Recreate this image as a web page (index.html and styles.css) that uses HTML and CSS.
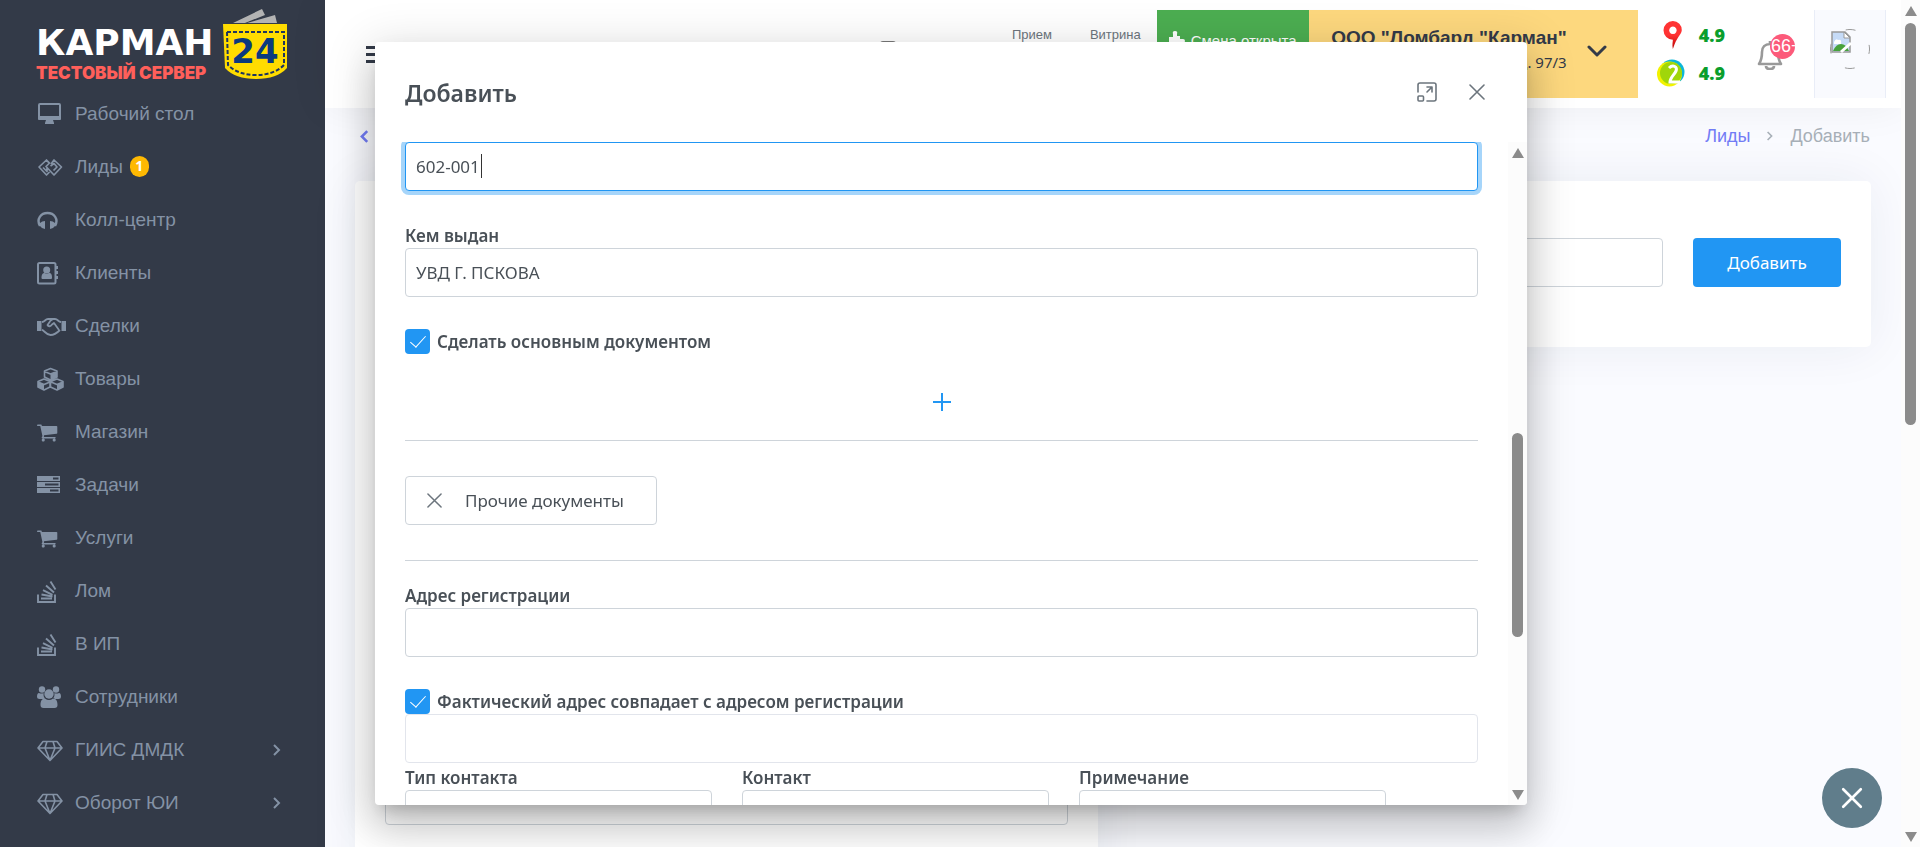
FILE: index.html
```html
<!DOCTYPE html>
<html lang="ru">
<head>
<meta charset="utf-8">
<title>Карман 24 — Лиды</title>
<link rel="stylesheet" href="styles.css">
</head>
<body>
<svg class="sprite" aria-hidden="true">
  <symbol id="i-desktop" viewBox="0 0 29 24"><path fill="none" stroke="currentColor" stroke-width="2" d="M3 2h19q1 0 1 1v12q0 2-1 2H3q-1 0-1-2V3q0-1 1-1z"/><path fill="currentColor" d="M1 14h23v3q0 1-1 1h-7l1 3v1H8v-1l1-3H2q-1 0-1-1z"/></symbol>
  <symbol id="i-leads" viewBox="0 0 29 24"><path fill="none" stroke="currentColor" stroke-width="1.700" stroke-linejoin="round" d="M12 8 9.500 5 2 12l7.500 8 3-3M9.500 5 13 8.500M6 12.500l4 4v-4M14 9l3-4 7.500 7L17 20l-8-8.500 4-4M13.500 11l3.500-2.500 3 3.500-3.500 3.500"/></symbol>
  <symbol id="i-phones" viewBox="0 0 29 24"><path fill="none" stroke="currentColor" stroke-width="2.400" d="M3 18C-1 11 4 5 10.500 5S22 11 18 18"/><path fill="currentColor" d="M3 15q2-2 5-2v8q-3 0-5-3zM18 15q-2-2-5-2v8q3 0 5-3z"/></symbol>
  <symbol id="i-book" viewBox="0 0 29 24"><rect x="1" y="2" width="17.500" height="20.500" rx="1.500" fill="none" stroke="currentColor" stroke-width="2"/><circle cx="9.700" cy="9" r="3.500" fill="currentColor"/><path fill="currentColor" d="M4.500 17c0-4 1.500-5 3-5q2 1.500 4.500 0c2 0 3 1 3 5q0 1-1 1h-8.500q-1 0-1-1zM19 5h2v3h-2zM19 10h2v3h-2zM19 15h2v3h-2z"/></symbol>
  <symbol id="i-shake" viewBox="0 0 29 24"><path fill="currentColor" d="M0 7h4.500v10H0zM24.500 7H29v10h-4.500z"/><path fill="none" stroke="currentColor" stroke-width="1.800" stroke-linejoin="round" d="M5 8c3 0 3-3 6-3h7c3 0 3 3 6 3M5 16c2 0 4 5 8.500 5S21 18 23 16M14 6l-3.500 5c1 2 3 1.500 4.500-.5L17 9l5 7M16 5l-3 2"/></symbol>
  <symbol id="i-cubes" viewBox="0 0 29 24"><path fill="none" stroke="currentColor" stroke-width="1.600" stroke-linejoin="round" d="M13.500 1.500 20 4v6l-6.500 3L7.500 10V4zM7.500 4.500l6 2.500L20 4.500M7 12l6 2.500v5.500L7 23l-6-3v-5.500zM1 15l6 2.500 6-2.500M20 12l6 2.500v5.500L20 23l-6.500-3v-5.500zM14 15l6 2.500 6-2.500"/><path fill="currentColor" d="M13.500 7 20 4.500V10l-6.500 3zM20 17.500l6-2.500v5l-6 3zM1 15l6 2.500V23l-6-3z"/></symbol>
  <symbol id="i-cart" viewBox="64 -107 2378 1968"><path fill="currentColor" d="M704 1536q0 52-38 90t-90 38-90-38-38-90 38-90 90-38 90 38 38 90zm896 0q0 52-38 90t-90 38-90-38-38-90 38-90 90-38 90 38 38 90zm128-1088v512q0 24-16.500 42.500t-40.500 21.500l-1044 122q13 60 13 70 0 16-24 64h920q26 0 45 19t19 45-19 45-45 19h-1024q-26 0-45-19t-19-45q0-11 8-31.500t16-36 21.500-40 15.500-29.500l-177-823h-204q-26 0-45-19t-19-45 19-45 45-19h256q16 0 28.500 6.500t19.500 15.500 13 24.500 8 26 5.500 29.500 4.500 26h1201q26 0 45 19t19 45z"/></symbol>
  <symbol id="i-tasks" viewBox="0 0 29 24"><path fill="currentColor" fill-rule="evenodd" d="M0 3h23v5H0zm16 1.500v2h5.500v-2zM0 9h23v5H0zm8 1.500v2h13.500v-2zM0 15h23v5H0zm13 1.500v2h8.500v-2z"/></symbol>
  <symbol id="i-stack" viewBox="0 0 29 24"><path fill="none" stroke="currentColor" stroke-width="1.900" d="M1 15.500V23h17v-7.500M4 19.500h11M4.500 15.500l11 2M6 11.200l9.500 4.600M9 6.500l8 7M13.500 2.500l5 8"/></symbol>
  <symbol id="i-users" viewBox="0 0 29 24"><g fill="currentColor"><circle cx="5" cy="4.500" r="3.200"/><circle cx="19" cy="4.500" r="3.200"/><circle cx="12" cy="9" r="4.700"/><path d="M0 12q0-4 2-4 2.500 1 4.500 0-.5 3 1.500 6H2.500Q0 14 0 12zM24 12q0-4-2-4-2.500 1-4.500 0 .5 3-1.500 6h5.500q2.500 0 2.500-2zM3.500 20c0-5 2-6.500 4.500-6.500q4 3 8 0c2.500 0 4.500 1.500 4.500 6.500q0 3-3 3h-11q-3 0-3-3z"/></g></symbol>
  <symbol id="i-gem" viewBox="0 0 29 24"><path fill="none" stroke="currentColor" stroke-width="1.600" stroke-linejoin="round" d="M6 3.500h14l5 6.500-12 12.500L1 10zM1 10h24M10 3.500 8 10l5 12.500L18 10l-2-6.500"/></symbol>
  <symbol id="i-right" viewBox="0 0 10 14"><path fill="none" stroke="currentColor" stroke-width="2" d="m2 2 5 5-5 5"/></symbol>
  <symbol id="i-x" viewBox="0 0 16 16"><path fill="none" stroke="currentColor" stroke-width="1.600" stroke-linecap="round" d="m1 1 14 14M15 1 1 15"/></symbol>
</svg>

<div class="app">
  <aside class="sidebar">
    <div class="logo">
      <div class="logo-words"><span class="logo-name">КАРМАН</span><span class="logo-server">ТЕСТОВЫЙ СЕРВЕР</span></div>
      <svg class="logo-pocket" viewBox="0 0 66 72" role="img" aria-label="24">
        <path fill="#b3b3b3" d="M11 14 40 0l3 6-20 8zM25 14l28-8 2 8z"/>
        <path fill="#ffdc00" d="M1 15h64v44q-10 11-31 11T3 59z"/>
        <path fill="none" stroke="#1d3461" stroke-width="2" stroke-dasharray="4 2" d="M5 23h57v33q-10 10-28 10T6 56z"/>
        <text x="33" y="54" text-anchor="middle" class="logo-num">24</text>
      </svg>
    </div>
    <nav class="menu">
      <a href="#"><svg><use href="#i-desktop"/></svg>Рабочий стол</a>
      <a href="#"><svg><use href="#i-leads"/></svg>Лиды<span class="count">1</span></a>
      <a href="#"><svg><use href="#i-phones"/></svg>Колл-центр</a>
      <a href="#"><svg><use href="#i-book"/></svg>Клиенты</a>
      <a href="#"><svg><use href="#i-shake"/></svg>Сделки</a>
      <a href="#"><svg><use href="#i-cubes"/></svg>Товары</a>
      <a href="#"><svg><use href="#i-cart"/></svg>Магазин</a>
      <a href="#"><svg><use href="#i-tasks"/></svg>Задачи</a>
      <a href="#"><svg><use href="#i-cart"/></svg>Услуги</a>
      <a href="#"><svg><use href="#i-stack"/></svg>Лом</a>
      <a href="#"><svg><use href="#i-stack"/></svg>В ИП</a>
      <a href="#"><svg><use href="#i-users"/></svg>Сотрудники</a>
      <a href="#"><svg><use href="#i-gem"/></svg>ГИИС ДМДК<svg class="more"><use href="#i-right"/></svg></a>
      <a href="#"><svg><use href="#i-gem"/></svg>Оборот ЮИ<svg class="more"><use href="#i-right"/></svg></a>
    </nav>
  </aside>

  <div class="page">
    <header class="topbar">
      <button class="burger" aria-label="Меню"><i></i><i></i><i></i></button>
      <svg class="doc" viewBox="0 0 16 26"><rect x="1" y="1" width="14" height="24" rx="2" fill="none" stroke="#777" stroke-width="2"/></svg>
      <span class="stat">Прием</span>
      <span class="stat">Витрина</span>
      <button class="shift"><svg viewBox="0 0 16 16"><path fill="currentColor" d="M6 0q3 0 2 3v2h3v3h3q2 0 2 2t-2 2h-2v4H0V6h4V3q-1-3 2-3z"/></svg>Смена открыта</button>
      <button class="company">
        <span class="company-text"><b>ООО "Ломбард "Карман"</b><span>д. 97/3</span></span>
        <svg viewBox="0 0 20 12"><path fill="none" stroke="currentColor" stroke-width="3" stroke-linecap="round" stroke-linejoin="round" d="m2 2 8 8 8-8"/></svg>
      </button>
      <div class="ratings">
        <svg viewBox="0 0 28 32"><defs><linearGradient id="pin" x2="0" y2="1"><stop offset=".5" stop-color="#ff3333"/><stop offset="1" stop-color="#b80000"/></linearGradient></defs><path fill="url(#pin)" fill-rule="evenodd" d="M16 1a9.500 9.500 0 0 1 9.500 10C25 16 20 18 16 31c-1-5 0-8 0-10A10 10 0 0 1 16 1zm0 6a4 4 0 1 0 .1 0z"/></svg>
        <b>4.9</b>
        <svg viewBox="0 0 28 28"><circle cx="15" cy="13" r="12.500" fill="#0db7d8"/><circle cx="12.500" cy="15" r="12.500" fill="#f2f200"/><circle cx="14" cy="14" r="11" fill="#a0d60a"/><path fill="none" stroke="#fff" stroke-width="3" d="M12 9c4-4 9-1 7 3s-6 7-6 11h10"/></svg>
        <b>4.9</b>
      </div>
      <button class="bell" aria-label="Уведомления"><svg viewBox="0 0 26 32"><path fill="none" stroke="#999" stroke-width="2.600" stroke-linejoin="round" d="M13 3v3M13 6c-5 0-8 3-8 8 0 7-1 9-3 12h22c-2-3-3-5-3-12 0-5-3-8-8-8zM9 28q0 3 4 3t4-3"/></svg><span class="bell-count">66+</span></button>
      <a class="avatar" href="#" aria-label="Профиль"><svg viewBox="0 0 40 40">
        <circle cx="20" cy="20" r="19.500" fill="none" stroke="#999" stroke-dasharray="10 20.630" stroke-dashoffset="5"/>
        <path fill="#c6dbf7" stroke="#999" stroke-width="1.500" d="M2 3h13l5 5v15H2z"/><path fill="#fff" stroke="#999" d="M14 3v6h6z"/><path fill="#fff" d="M4 13q2-4 4-2 4-1 3 4H4z"/><path fill="#47a23c" d="M3 22q3-7 8-7t8 7z"/><path stroke="#fff" stroke-width="3" d="m11 23 10-9"/></svg></a>
    </header>

    <main class="content">
      <div class="crumbs">
        <a class="back" href="#" aria-label="Назад"><svg viewBox="0 0 10 14"><path fill="none" stroke="currentColor" stroke-width="2.400" d="M8 2 3 7l5 5"/></svg></a>
        <a href="#">Лиды</a><svg class="sep"><use href="#i-right"/></svg><span>Добавить</span>
      </div>
      <div class="halves">
        <section class="card stack-card">
          <input class="field" aria-label="Источник">
          <input class="field" aria-label="Фамилия">
          <input class="field" aria-label="Имя">
          <input class="field" aria-label="Отчество">
          <input class="field" aria-label="Телефон">
          <input class="field" aria-label="Комментарий">
        </section>
        <section class="card search-card">
          <input class="field" aria-label="Поиск">
          <button class="primary">Добавить</button>
        </section>
      </div>
    </main>
  </div>
  <div class="scroll page-scroll"><i class="up"></i><i class="thumb"></i><i class="down"></i></div>
</div>

<div class="overlay">
  <div class="modal" role="dialog" aria-labelledby="title">
    <div class="modal-head">
      <h2 id="title">Добавить</h2>
      <button aria-label="Развернуть"><svg class="max" viewBox="0 0 20 20"><path fill="none" stroke="currentColor" stroke-width="1.600" stroke-linecap="round" stroke-linejoin="round" d="M1 10V3q0-2 2-2h14q2 0 2 2v14q0 2-2 2h-7M10 10l5-5M10 5h5v5"/><rect x="1" y="14" width="5.500" height="5" rx="1" fill="none" stroke="currentColor" stroke-width="1.600"/></svg></button>
      <button aria-label="Закрыть"><svg><use href="#i-x"/></svg></button>
    </div>
    <div class="modal-body">
      <form class="form">
        <div class="code"><input class="field focused" aria-label="Код подразделения" value="602-001"><i class="caret"></i></div>
        <div class="group"><label for="issuer">Кем выдан</label><input class="field" id="issuer" value="УВД Г. ПСКОВА"></div>
        <div class="check"><input type="checkbox" id="main" checked><label for="main">Сделать основным документом</label></div>
        <button type="button" class="plus" aria-label="Добавить документ"><svg viewBox="0 0 18 18"><path stroke="currentColor" stroke-width="2" d="M9 0v18M0 9h18"/></svg></button>
        <hr>
        <button type="button" class="other"><svg><use href="#i-x"/></svg>Прочие документы</button>
        <hr>
        <div class="group address"><label for="reg">Адрес регистрации</label><input class="field" id="reg"></div>
        <div class="check"><input type="checkbox" id="same" checked><label for="same">Фактический адрес совпадает с адресом регистрации</label></div>
        <input class="field" aria-label="Фактический адрес" disabled>
        <div class="contacts">
          <div><label for="ctype">Тип контакта</label><input class="field" id="ctype"></div>
          <div><label for="contact">Контакт</label><input class="field" id="contact"></div>
          <div><label for="note">Примечание</label><input class="field" id="note"></div>
        </div>
      </form>
      <div class="scroll"><i class="up"></i><i class="thumb modal-thumb"></i><i class="down"></i></div>
    </div>
  </div>
</div>
<button class="fab" aria-label="Закрыть меню"><svg viewBox="0 0 20 20"><path stroke="currentColor" stroke-width="2.400" stroke-linecap="round" d="m2 2 16 16M18 2 2 18"/></svg></button>
</body>
</html>
```
FILE: styles.css
```css
* { box-sizing: border-box; }
body { margin: 0; font-family: "Liberation Sans", Arial, sans-serif; color: #333a48; background: #fafbff; overflow: hidden; }
button { border: 0; padding: 0; background: none; font: inherit; color: inherit; }
a { color: inherit; text-decoration: none; }
svg { display: block; flex: none; }
.sprite { position: absolute; width: 0; height: 0; }
.app { display: flex; height: 100vh; overflow: hidden; }

.sidebar { width: 325px; flex: none; background: #333a48; color: #8492a5; overflow: hidden; }
.logo { display: flex; height: 87px; padding: 9px 0 0 36px; gap: 6px; }
.logo-words { width: 180px; display: flex; flex-direction: column; padding-top: 14px; white-space: nowrap; }
.logo-name { font: bold 36px/40px "DejaVu Sans", sans-serif; color: #fff; }
.logo-server { font: 900 17px/20px Inter, sans-serif; color: #ff5f5a; }
.logo-pocket { width: 66px; height: 72px; }
.logo-num { font: bold 34px "DejaVu Sans", sans-serif; fill: #0b3a7e; }
.menu a { display: flex; align-items: center; height: 53px; padding: 0 43px 0 37px; font-size: 19px; }
.menu svg { width: 29px; height: 24px; margin-right: 9px; }
.menu .more { width: 10px; height: 14px; margin: 0 0 0 auto; }
.count { margin-left: 7px; width: 19px; height: 21px; border-radius: 10px; background: #ffb902; color: #fff; font: bold 14px/20px "Open Sans", sans-serif; text-align: center; }

.page { flex: 1; min-width: 0; }
.topbar { display: flex; align-items: center; height: 108px; padding: 10px 15px 10px 41px; background: #fff; box-shadow: 0 0 40px rgba(0, 0, 0, .06); }
.burger { display: grid; gap: 4px; width: 25px; margin-right: auto; }
.burger i { height: 3px; background: #333a48; }
.doc { width: 16px; height: 26px; margin-right: 116px; }
.stat { align-self: flex-start; margin-top: 15px; font-size: 13px; line-height: 20px; color: #6c757d; margin-right: 38px; }
.stat + .stat { margin-right: 16px; }
.shift { align-self: stretch; display: flex; gap: 6px; width: 152px; padding: 21px 0 0 12px; background: #4cae51; color: #fff; font-size: 15px; line-height: 20px; }
.shift svg { width: 16px; height: 16px; }
.company { align-self: stretch; display: flex; align-items: flex-start; justify-content: flex-end; gap: 20px; width: 329px; padding: 16px 31px 0 0; background: #fdd87e; }
.company-text { display: flex; flex-direction: column; text-align: right; font: 15px/24px "Noto Sans", sans-serif; }
.company b { font: bold 19px/24px "Liberation Sans", sans-serif; }
.company svg { width: 20px; height: 12px; margin-top: 19px; }
.ratings { display: grid; grid-template-columns: 28px auto; gap: 8px 14px; align-items: center; margin: 0 32px 0 19px; color: #0a9e2c; font: bold 18px/30px "Open Sans", sans-serif; }
.ratings svg { width: 28px; height: 30px; }
.bell { position: relative; width: 26px; margin-right: 31px; }
.bell svg { width: 26px; height: 32px; }
.bell-count { position: absolute; left: 13px; top: -4px; width: 25px; height: 25px; border-radius: 13px; background: #fc5a7a; color: #fff; font-size: 18px; line-height: 25px; overflow: hidden; padding-left: 1px; text-align: left; }
.avatar { align-self: stretch; width: 72px; padding: 19px 15px; background: #f9fafe; border: solid #e9edf7; border-width: 0 1px; }
.avatar svg { width: 40px; height: 40px; }

.content { padding: 0 30px; }
.crumbs { display: flex; align-items: center; gap: 16px; height: 73px; padding: 0 1px 17px 0; font-size: 18px; color: #a7afb7; }
.crumbs a { color: #727cf5; }
.crumbs .back { margin-right: auto; }
.back svg { width: 12px; height: 15px; margin-left: 3px; }
.sep { width: 8px; height: 12px; }
.halves { display: grid; grid-template-columns: 1fr 1fr; gap: 30px; align-items: start; }
.card { background: #fff; border-radius: 5px; box-shadow: 0 0 50px rgba(30, 40, 90, .07); }
.search-card { display: flex; gap: 30px; padding: 57px 30px 60px; }
.stack-card { display: grid; gap: 64px; padding: 30px 30px 60px; }
.field { display: block; width: 100%; height: 49px; padding: 0 10px; border: 1px solid #ced4da; border-radius: 4px; background: #fff; color: #495057; font: 17px "Noto Sans", sans-serif; outline: 0; }
.primary { flex: none; width: 148px; height: 49px; border-radius: 4px; background: #2196f3; color: #fff; font: 17px "Noto Sans", sans-serif; }

.scroll { width: 19px; flex: none; display: flex; flex-direction: column; align-items: center; background: #fcfcfc; padding: 6px 0 5px; }
.scroll .thumb { width: 11px; border-radius: 6px; background: #8b8b8b; }
.up, .down { border: 6px solid transparent; }
.up { border-bottom: 10px solid #8b8b8b; border-top: 0; }
.down { border-top: 10px solid #8b8b8b; border-bottom: 0; margin-top: auto; }
.page-scroll .thumb { height: 402px; margin-top: 7px; }
.scroll .modal-thumb { height: 204px; margin-top: 275px; }

.overlay { position: fixed; inset: 0 18px 0 0; display: flex; align-items: center; justify-content: center; }
.modal { width: 60vw; height: 90vh; display: flex; flex-direction: column; background: #fff; border-radius: 4px; overflow: hidden; color: #495057; font: 17px/25px "Noto Sans", sans-serif; box-shadow: 0 11px 15px -7px rgba(0, 0, 0, .2), 0 24px 38px 3px rgba(0, 0, 0, .14), 0 9px 46px 8px rgba(0, 0, 0, .12); }
.modal-head { flex: none; display: flex; align-items: center; gap: 10px; height: 100px; padding: 0 30px; }
.modal-head h2 { margin: 0 auto 0 0; padding-top: 3px; font-size: 23px; font-weight: 600; }
.modal-head button { display: grid; place-items: center; width: 40px; height: 40px; color: #6c757d; }
.modal-head svg { width: 16px; height: 16px; }
.modal-head .max { width: 20px; height: 20px; }
.modal-body { flex: 1; min-height: 0; display: flex; overflow: hidden; }
.form { flex: 1; padding: 0 30px; }
.form label { display: block; font-weight: 600; }
.code { position: relative; }
.focused { border-color: #2196f3; box-shadow: 0 0 0 4px #a6d5fa; }
.caret { position: absolute; left: 76px; top: 12px; width: 1px; height: 24px; background: #333; }
.group { padding-top: 32px; }
.address { padding-top: 22px; }
.check { display: flex; align-items: center; gap: 7px; margin-top: 32px; }
.check input { appearance: none; margin: 0; width: 25px; height: 25px; border-radius: 4px; background: #2196f3; display: grid; place-items: center; }
.check input::before { content: ""; width: 7px; height: 14px; border: solid #fff; border-width: 0 1px 1px 0; rotate: 42deg; margin-bottom: 4px; }
.plus { display: grid; place-items: center; width: 50px; height: 50px; margin: 23px auto 13px; color: #2196f3; }
.plus svg { width: 18px; height: 18px; }
hr { margin: 0; border: 0; height: 1px; background: #ced4da; }
.other { display: flex; align-items: center; gap: 23px; height: 49px; margin: 35px 0; padding: 0 32px 0 21px; border: 1px solid #ced4da; border-radius: 4px; }
.other svg { width: 15px; height: 15px; color: #6c757d; }
.field:disabled { border-color: #e2e5ec; }
.contacts { display: grid; grid-template-columns: 1fr 1fr 1fr 62px; gap: 30px; padding-top: 2px; }
.fab { position: fixed; right: 38px; bottom: 19px; display: grid; place-items: center; width: 60px; height: 60px; border-radius: 50%; background: #607d8b; color: #fff; }
.fab svg { width: 22px; height: 22px; }
```
